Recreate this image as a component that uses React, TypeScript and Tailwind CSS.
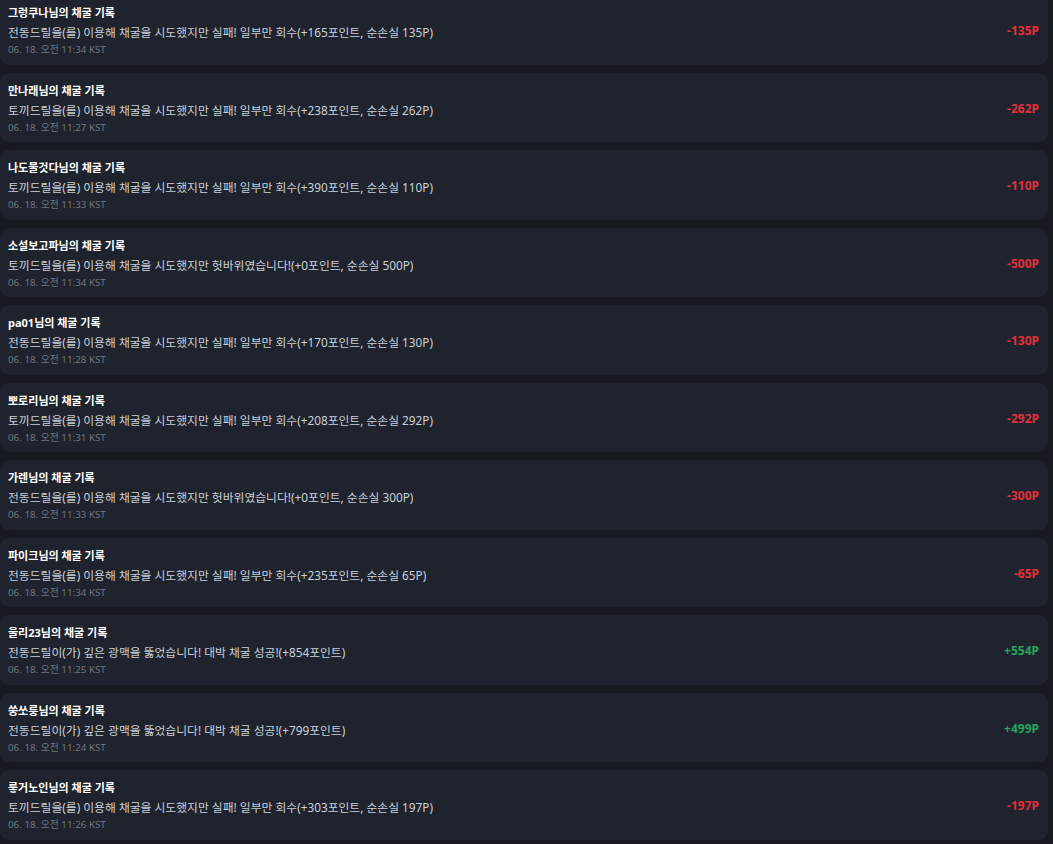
import React from 'react';

type MiningLog = {
  user: string;
  message: string;
  time: string;
  amount: number;
};

const logs: MiningLog[] = [
  { user: '그렁쿠나', message: '전동드릴을(를) 이용해 채굴을 시도했지만 실패! 일부만 회수(+165포인트, 순손실 135P)', time: '06. 18. 오전 11:34 KST', amount: -135 },
  { user: '만나래', message: '토끼드릴을(를) 이용해 채굴을 시도했지만 실패! 일부만 회수(+238포인트, 순손실 262P)', time: '06. 18. 오전 11:27 KST', amount: -262 },
  { user: '나도물것다', message: '토끼드릴을(를) 이용해 채굴을 시도했지만 실패! 일부만 회수(+390포인트, 순손실 110P)', time: '06. 18. 오전 11:33 KST', amount: -110 },
  { user: '소설보고파', message: '토끼드릴을(를) 이용해 채굴을 시도했지만 헛바위였습니다!(+0포인트, 순손실 500P)', time: '06. 18. 오전 11:34 KST', amount: -500 },
  { user: 'pa01', message: '전동드릴을(를) 이용해 채굴을 시도했지만 실패! 일부만 회수(+170포인트, 순손실 130P)', time: '06. 18. 오전 11:28 KST', amount: -130 },
  { user: '뽀로리', message: '토끼드릴을(를) 이용해 채굴을 시도했지만 실패! 일부만 회수(+208포인트, 순손실 292P)', time: '06. 18. 오전 11:31 KST', amount: -292 },
  { user: '가렌', message: '전동드릴을(를) 이용해 채굴을 시도했지만 헛바위였습니다!(+0포인트, 순손실 300P)', time: '06. 18. 오전 11:33 KST', amount: -300 },
  { user: '파이크', message: '전동드릴을(를) 이용해 채굴을 시도했지만 실패! 일부만 회수(+235포인트, 순손실 65P)', time: '06. 18. 오전 11:34 KST', amount: -65 },
  { user: '울리23', message: '전동드릴이(가) 깊은 광맥을 뚫었습니다! 대박 채굴 성공!(+854포인트)', time: '06. 18. 오전 11:25 KST', amount: 554 },
  { user: '쑹쏘룽', message: '전동드릴이(가) 깊은 광맥을 뚫었습니다! 대박 채굴 성공!(+799포인트)', time: '06. 18. 오전 11:24 KST', amount: 499 },
  { user: '뤃거노인', message: '토끼드릴을(를) 이용해 채굴을 시도했지만 실패! 일부만 회수(+303포인트, 순손실 197P)', time: '06. 18. 오전 11:26 KST', amount: -197 },
];

const LogCard = ({ log }: { log: MiningLog }) => {
  const positive = log.amount > 0;
  return (
    <div className="flex items-center justify-between rounded-[9px] bg-[#1f232d] pl-2 pr-[9px] pt-[10px] pb-[7.5px]">
      <div className="flex flex-col">
        <div className="text-[11px] leading-[16px] font-bold text-white">{log.user}님의 채굴 기록</div>
        <div className="mt-[2px] text-[11.8px] leading-[18px] text-[#c9d1d9]">{log.message}</div>
        <div className="mt-[2px] text-[9.8px] leading-[14px] text-[#6e7681]">{log.time}</div>
      </div>
      <div className={`text-[12px] font-bold ${positive ? 'text-[#25a55c]' : 'text-[#e5303a]'}`}>
        {positive ? `+${log.amount}P` : `${log.amount}P`}
      </div>
    </div>
  );
};

export default function App() {
  return (
    <div
      className="h-[844px] overflow-hidden bg-[#171a21] pr-[5px]"
      style={{ fontFamily: '"Noto Sans", "Noto Sans CJK KR", sans-serif' }}
    >
      {/* list is scrolled a few pixels down */}
      <div className="-mt-[5px] flex flex-col gap-2">
        {logs.map((log, i) => (
          <LogCard key={i} log={log} />
        ))}
      </div>
    </div>
  );
}
